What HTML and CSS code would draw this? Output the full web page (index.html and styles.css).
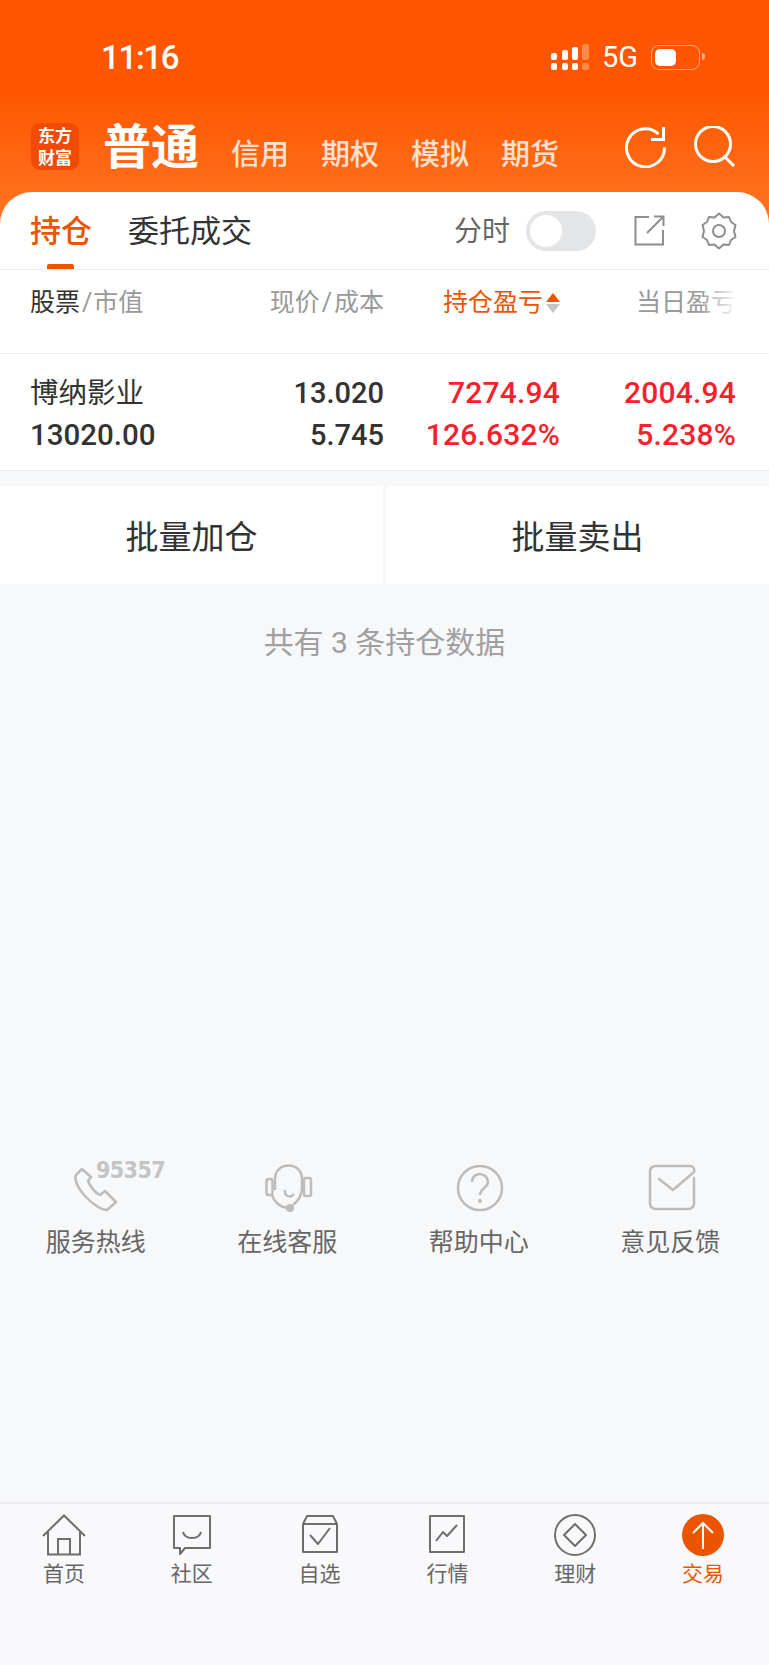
FILE: index.html
```html
<!DOCTYPE html>
<html lang="zh-CN">
<head>
    <meta charset="UTF-8">
    <meta name="viewport" content="width=device-width, initial-scale=1.0">
    <title>交易</title>
    <link rel="stylesheet" href="styles.css">
</head>
<body>
    <div class="page">
        <header class="top">
            <div class="status">
                <span class="time">11:16</span>
                <div class="status-right">
                    <svg class="signal" width="38" height="27" viewBox="0 0 38 27" fill="#fff">
                        <rect x="0" y="9" width="6" height="7" rx="2"/>
                        <rect x="11" y="6" width="6" height="10" rx="2"/>
                        <rect x="21" y="3" width="6" height="13" rx="2"/>
                        <rect x="31" y="0" width="7" height="16" rx="2" opacity=".3"/>
                        <rect x="0" y="19" width="6" height="7" rx="2"/>
                        <rect x="11" y="19" width="6" height="7" rx="2"/>
                        <rect x="21" y="19" width="6" height="7" rx="2"/>
                        <rect x="31" y="19" width="7" height="7" rx="2" opacity=".3"/>
                    </svg>
                    <span class="net">5G</span>
                    <div class="battery"><div class="battery-fill"></div></div>
                </div>
            </div>
            <nav class="nav">
                <div class="logo"><span>东方</span><span>财富</span></div>
                <span class="nav-main">普通</span>
                <span class="nav-item">信用</span>
                <span class="nav-item">期权</span>
                <span class="nav-item">模拟</span>
                <span class="nav-item">期货</span>
                <div class="nav-icons">
                    <svg width="42" height="42" viewBox="0 0 42 42" fill="none" stroke="#fff" stroke-width="3">
                        <path d="M39.5 21.500A19 19 0 1 1 33.500 8"/>
                        <path d="M26 13.500H38.500V1"/>
                    </svg>
                    <svg width="42" height="42" viewBox="0 0 42 42" fill="none" stroke="#fff" stroke-width="3">
                        <circle cx="19" cy="18" r="17.500"/>
                        <path d="M31 31L40 40"/>
                    </svg>
                </div>
            </nav>
        </header>

        <main class="card">
            <div class="tabs">
                <span class="tab tab-active">持仓</span>
                <span class="tab">委托成交</span>
                <span class="fen">分时</span>
                <div class="switch"><div class="knob"></div></div>
                <svg class="share" width="31" height="31" viewBox="0 0 31 31" fill="none" stroke="#8e8e8e" stroke-width="2">
                    <path d="M15 2H1.500V29.500H29V15"/>
                    <path d="M13 18L29 2"/>
                    <path d="M20 1.500H29.500V11"/>
                </svg>
                <svg class="gear" width="36" height="38" viewBox="0 0 36 38" fill="none" stroke="#8e8e8e" stroke-width="2">
                    <path d="M18 1.500L22.500 5.500L28 5L30 10L34.500 13L33 19L34.500 25L30 28L28 33L22.500 32.500L18 36.500L13.500 32.500L8 33L6 28L1.500 25L3 19L1.500 13L6 10L8 5L13.500 5.500Z" stroke-linejoin="round"/>
                    <circle cx="18" cy="19" r="6"/>
                </svg>
            </div>

            <div class="thead">
                <div class="col col-name"><span class="dark">股票</span><i>/</i>市值</div>
                <div class="col col-price">现价<i>/</i>成本</div>
                <div class="col col-hold sorted">持仓盈亏
                    <span class="sort"><b class="up"></b><b class="down"></b></span>
                </div>
                <div class="col col-day">当日盈亏</div>
                <div class="fade"></div>
            </div>

            <div class="row">
                <div class="col col-name">
                    <div class="stock">博纳影业</div>
                    <div class="num">13020.00</div>
                </div>
                <div class="col col-price">
                    <div class="num">13.020</div>
                    <div class="num">5.745</div>
                </div>
                <div class="col col-hold red">
                    <div class="num">7274.94</div>
                    <div class="num">126.632%</div>
                </div>
                <div class="col col-day red">
                    <div class="num">2004.94</div>
                    <div class="num">5.238%</div>
                </div>
            </div>

            <div class="actions">
                <div class="action">批量加仓</div>
                <div class="action">批量卖出</div>
            </div>

            <p class="summary">共有 3 条持仓数据</p>

            <div class="service">
                <div class="service-item">
                    <span class="hotline">95357</span>
                    <svg width="48" height="48" viewBox="0 0 48 48" fill="none" stroke="#bcbcbc" stroke-width="2.500" stroke-linejoin="round">
                        <path d="M10 5L4 11C2.500 14 4 21 12 31C21 41 30 46 35 46L44 38L33 27L28 31C23 29 18 22 16 17L19 13Z"/>
                    </svg>
                    <span class="service-label">服务热线</span>
                </div>
                <div class="service-item">
                    <svg width="48" height="48" viewBox="0 0 48 48" fill="none" stroke="#bcbcbc" stroke-width="2.500">
                        <path d="M10 26V15C10 -3 37 -3 37 15V24C37 32 33 37 28 41"/>
                        <rect x="1.500" y="15" width="6" height="16" rx="2"/>
                        <rect x="39" y="14" width="7" height="18" rx="2"/>
                        <path d="M20 26C19 33 26 34 29 30"/>
                        <path d="M7 31C9 38 15 43 22 44"/>
                        <circle cx="25" cy="44" r="4" fill="#bcbcbc" stroke="none"/>
                    </svg>
                    <span class="service-label">在线客服</span>
                </div>
                <div class="service-item">
                    <svg width="48" height="48" viewBox="0 0 48 48" fill="none" stroke="#bcbcbc" stroke-width="2.500">
                        <circle cx="24" cy="24" r="22"/>
                        <path d="M16 18C16 7 32 8 32 18C32 24 24 24 24 31"/>
                        <circle cx="24" cy="37" r="2" fill="#bcbcbc" stroke="none"/>
                    </svg>
                    <span class="service-label">帮助中心</span>
                </div>
                <div class="service-item">
                    <svg width="48" height="48" viewBox="0 0 48 48" fill="none" stroke="#bcbcbc" stroke-width="2.500" stroke-linejoin="round">
                        <path d="M46 14V39C46 43 44 45 40 45H8C4 45 2 43 2 39V8C2 4 4 2 8 2H42C45 2 47 5 46 8L25 26L11 15" stroke-linecap="round"/>
                    </svg>
                    <span class="service-label">意见反馈</span>
                </div>
            </div>
        </main>

        <footer class="tabbar">
            <div class="tabbar-item">
                <svg width="44" height="42" viewBox="0 0 44 42" fill="none" stroke="#6e6e6e" stroke-width="2">
                    <path d="M1 22L22 1.500L43 22"/>
                    <path d="M6 18V40.500H38V18"/>
                    <path d="M16 40.500V25H28V40.500"/>
                </svg>
                <span>首页</span>
            </div>
            <div class="tabbar-item">
                <svg width="44" height="42" viewBox="0 0 44 42" fill="none" stroke="#6e6e6e" stroke-width="2" stroke-linejoin="round">
                    <path d="M4 2H40V34H15L10 40V34H4Z"/>
                    <path d="M13 18C15 26 29 26 31 18"/>
                </svg>
                <span>社区</span>
            </div>
            <div class="tabbar-item">
                <svg width="44" height="42" viewBox="0 0 44 42" fill="none" stroke="#6e6e6e" stroke-width="2" stroke-linejoin="round">
                    <path d="M5 10H39V38H5Z"/>
                    <path d="M5 10L9 2H35L39 10"/>
                    <path d="M12 21L20 30L32 14"/>
                </svg>
                <span>自选</span>
            </div>
            <div class="tabbar-item">
                <svg width="44" height="42" viewBox="0 0 44 42" fill="none" stroke="#6e6e6e" stroke-width="2" stroke-linejoin="round">
                    <path d="M5 2H39V38H5Z"/>
                    <path d="M11 27L18 18L22 22L32 11"/>
                </svg>
                <span>行情</span>
            </div>
            <div class="tabbar-item">
                <svg width="44" height="42" viewBox="0 0 44 42" fill="none" stroke="#6e6e6e" stroke-width="2" stroke-linejoin="round">
                    <circle cx="22" cy="21" r="20"/>
                    <path d="M22 10L33 21L22 32L11 21Z"/>
                </svg>
                <span>理财</span>
            </div>
            <div class="tabbar-item tabbar-active">
                <svg width="44" height="42" viewBox="0 0 44 42" fill="none" stroke="#fff" stroke-width="2">
                    <circle cx="22" cy="21" r="21" fill="#ec5500" stroke="none"/>
                    <path d="M22 35V9"/>
                    <path d="M12 19L22 9L32 19"/>
                </svg>
                <span>交易</span>
            </div>
        </footer>
    </div>
</body>
</html>
```

FILE: styles.css
```css
* {
    box-sizing: border-box;
}

html, body {
    margin: 0;
    padding: 0;
}

body {
    font-family: Roboto, "Noto Sans CJK SC", sans-serif;
    background-color: #f7f8fa;
}

.page {
    width: 769px;
    height: 1665px;
    display: flex;
    flex-direction: column;
    overflow: hidden;
}

/* orange header */
.top {
    height: 230px;
    margin-bottom: -38px;
    color: #fff;
    background: linear-gradient(#ff5500 0, #ff5600 90px, #ff701c 200px);
}

.status {
    height: 114px;
    display: flex;
    align-items: center;
    padding: 0 69px 0 101px;
    justify-content: space-between;
}

.time {
    font-size: 33px;
    font-weight: 500;
    letter-spacing: -1.3px;
}

.status-right {
    display: flex;
    align-items: center;
}

.signal {
    margin-right: 13px;
}

.net {
    font-size: 29px;
    margin-right: 13px;
}

.battery {
    position: relative;
    width: 49px;
    height: 25px;
    padding: 3px;
    border: 1.500px solid rgba(255, 255, 255, 0.5);
    border-radius: 8px;
}

.battery:after {
    content: "";
    position: absolute;
    right: -6px;
    top: 7px;
    width: 3px;
    height: 7px;
    border-radius: 0 3px 3px 0;
    background-color: rgba(255, 255, 255, 0.5);
}

.battery-fill {
    width: 21px;
    height: 17px;
    border-radius: 5px;
    background-color: #fff;
}

.nav {
    display: flex;
    align-items: center;
    height: 66px;
    padding-left: 31px;
}

.logo {
    width: 48px;
    height: 47px;
    margin-right: 24px;
    margin-top: -2px;
    border-radius: 9px;
    background-color: #f04a05;
    display: flex;
    flex-direction: column;
    align-items: center;
    justify-content: center;
    font-family: "Noto Sans CJK SC", sans-serif;
    font-size: 17px;
    font-weight: 700;
}

.logo span {
    display: block;
    height: 22px;
    line-height: 22px;
}

.nav-main {
    font-family: "Noto Sans CJK SC", sans-serif;
    font-size: 48px;
    font-weight: 700;
    line-height: 66px;
    margin-right: 32px;
    margin-top: -8px;
}

.nav-item {
    font-family: "Noto Sans CJK SC", sans-serif;
    font-size: 29px;
    font-weight: 500;
    width: 58px;
    margin-right: 32px;
    opacity: 0.8;
    padding-top: 9px;
    white-space: nowrap;
}

.nav-icons {
    margin-left: auto;
    padding-right: 33px;
    display: flex;
    gap: 27px;
}

/* white card */
.card {
    flex: 1;
    position: relative;
    display: flex;
    flex-direction: column;
}

.tabs {
    height: 78px;
    display: flex;
    align-items: center;
    padding: 0 31px 4px 30px;
    background-color: #fff;
    border-bottom: 1px solid #ededed;
    border-radius: 32px 32px 0 0;
}

.tab {
    font-size: 31px;
    color: #333;
    margin-right: 36px;
    position: relative;
    font-family: "Noto Sans CJK SC", sans-serif;
}

.tab-active {
    color: #ec5500;
    font-weight: 500;
}

.tab-active:after {
    content: "";
    position: absolute;
    left: 17px;
    bottom: -18px;
    width: 27px;
    height: 5px;
    border-radius: 2px 2px 0 0;
    background-color: #ec5500;
}

.fen {
    margin-left: auto;
    font-size: 28px;
    color: #666;
    margin-right: 16px;
}

.switch {
    width: 70px;
    height: 40px;
    border-radius: 20px;
    background-color: #e4e5e7;
    padding: 4px;
    margin-right: 38px;
    margin-top: 4px;
}

.knob {
    width: 32px;
    height: 32px;
    border-radius: 50%;
    background-color: #fff;
}

.share {
    margin-right: 36px;
    margin-top: 4px;
}

.gear {
    margin-right: 1px;
    margin-top: 4px;
}

/* table */
.thead, .row {
    display: flex;
    background-color: #fff;
    padding: 0 33px 0 30px;
    position: relative;
}

.thead {
    height: 84px;
    padding-top: 15px;
    font-size: 25px;
    line-height: 36px;
    color: #999;
    border-bottom: 1px solid #efefef;
}

.thead i {
    font-style: normal;
    margin: 0 2px;
}

.col-name i {
    margin: 0 1px 0 2px;
}

.dark {
    color: #333;
}

.col-name {
    width: 170px;
}

.col-price {
    width: 184px;
    text-align: right;
}

.col-hold {
    width: 176px;
    text-align: right;
}

.col-day {
    width: 176px;
    text-align: right;
    white-space: nowrap;
}

.sorted {
    color: #ec5500;
    display: flex;
    justify-content: flex-end;
    align-items: center;
    height: 36px;
    gap: 3px;
}

.sort {
    display: flex;
    flex-direction: column;
    gap: 2px;
}

.sort b {
    display: block;
    width: 0;
    height: 0;
    border-left: 7.500px solid transparent;
    border-right: 7.500px solid transparent;
}

.up {
    border-bottom: 9px solid #ec5500;
}

.down {
    border-top: 9px solid #c4c4c4;
}

.fade {
    position: absolute;
    right: 30px;
    top: 0;
    width: 40px;
    height: 80px;
    background: linear-gradient(to right, rgba(255, 255, 255, 0), #fff);
}

.row {
    height: 117px;
    padding-top: 18px;
    border-bottom: 1px solid #ececec;
    color: #333;
}

.row .col {
    display: flex;
    flex-direction: column;
}

.stock {
    font-size: 28.500px;
    height: 42px;
    padding-top: 1px;
    line-height: 42px;
    white-space: nowrap;
    color: #333;
}

.num {
    font-size: 29px;
    font-weight: 500;
    line-height: 42px;
    white-space: nowrap;
}

.col-name .num {
    font-size: 29.500px;
}

.red {
    color: #f5222d;
}

.red .num {
    font-size: 30px;
    letter-spacing: 0.2px;
}

.actions {
    margin-top: 15px;
    display: flex;
    gap: 3px;
}

.action {
    flex: 1;
    height: 98px;
    background-color: #fff;
    display: flex;
    align-items: center;
    justify-content: center;
    font-size: 33px;
    color: #333;
}

.summary {
    margin: 39px 0 0;
    text-align: center;
    font-size: 30px;
    line-height: 40px;
    color: #a0a0a0;
}

.service {
    margin-top: 501px;
    margin-right: 3px;
    display: grid;
    grid-template-columns: repeat(4, 1fr);
}

.service-item {
    position: relative;
    display: flex;
    flex-direction: column;
    align-items: center;
}

.service-item + .service-item svg {
    margin-left: 3px;
}

.hotline {
    position: absolute;
    left: 96px;
    top: -7px;
    font-family: "DejaVu Sans", sans-serif;
    font-stretch: condensed;
    font-size: 23px;
    font-weight: 700;
    line-height: 26px;
    letter-spacing: -0.6px;
    color: #c4c4c4;
}

.service-label {
    margin-top: 13px;
    font-size: 25px;
    line-height: 36px;
    color: #666;
}

/* bottom bar */
.tabbar {
    height: 163px;
    padding: 10px 2px 0 0;
    border-top: 2px solid #ebebed;
    background-color: #f9f9fb;
    display: grid;
    grid-template-columns: repeat(6, 1fr);
    align-items: start;
}

.tabbar-item {
    display: flex;
    flex-direction: column;
    align-items: center;
    font-size: 21px;
    line-height: 30px;
    color: #666;
}

.tabbar-item span {
    margin-top: 3px;
}

.tabbar-active {
    color: #ec5500;
}
```
